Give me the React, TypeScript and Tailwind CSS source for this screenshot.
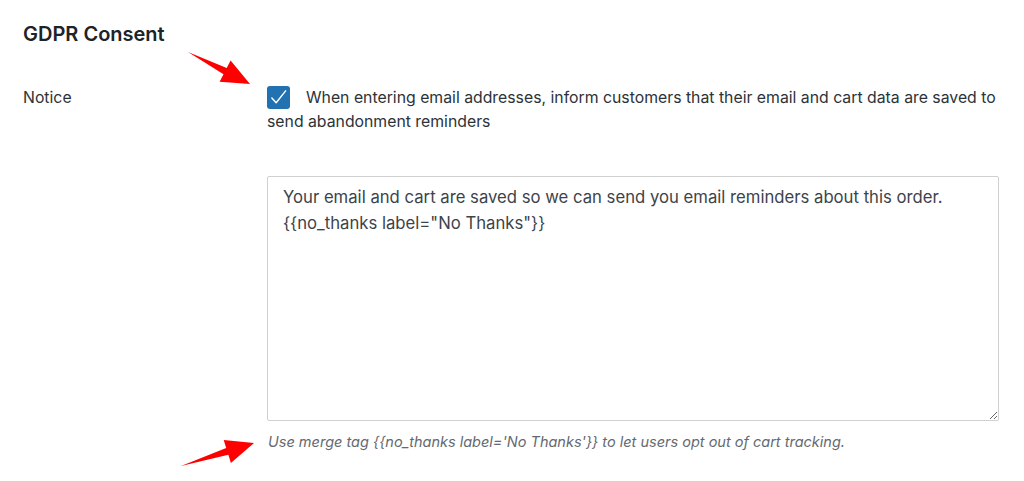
import React from "react";

const NOTICE_TEXT =
  'Your email and cart are saved so we can send you email reminders about this order.\n{{no_thanks label="No Thanks"}}';

function Arrows() {
  return (
    <svg
      className="pointer-events-none absolute left-0 top-0"
      width="1024"
      height="481"
      viewBox="0 0 1024 481"
    >
      <polygon
        fill="#ff0000"
        points="188,52 226.7,68 230.6,60.4 250,84 219.6,81.8 223.5,74.2"
      />
      <polygon
        fill="#ff0000"
        points="181,466 226.2,448.1 223.7,439.9 254,443 230.9,462.9 228.4,454.7"
      />
    </svg>
  );
}

export default function App() {
  return (
    <div
      className="relative h-[481px] w-[1024px] overflow-hidden bg-white text-[#3c434a]"
      style={{ fontFamily: "Inter, 'Noto Sans', sans-serif" }}
    >
      <div className="pl-[23px] pt-[22px]">
        <h2 className="text-[20px] font-semibold leading-[24px] text-[#1d2327]">
          GDPR Consent
        </h2>

        <div className="mt-[40px] flex">
          <div className="w-[244px] shrink-0 text-[15.8px] leading-[24px] text-[#2c3338]">
            Notice
          </div>

          <div className="w-[733px]">
            <label className="block text-[15.8px] leading-[24px] text-[#2c3338]">
              <span className="mr-[16px] inline-flex h-[23px] w-[23px] items-center justify-center rounded-[3px] bg-[#2271b1] align-top">
                <svg width="19" height="19" viewBox="0 0 20 20" fill="none">
                  <path
                    d="M3 10.5l4.5 5L17.5 3"
                    stroke="#ffffff"
                    strokeWidth="1.5"
                    strokeLinecap="round"
                    strokeLinejoin="round"
                  />
                </svg>
              </span>
              When entering email addresses, inform customers that their email and cart data are saved to send abandonment reminders
            </label>

            <textarea
              className="mt-[42px] block h-[245px] w-[732px] resize rounded-[2px] border border-[#d0d0d0] bg-white px-[15px] pt-[7px] text-[16.7px] leading-[26px] text-[#3c434a] outline-none"
              style={{ fontFamily: "Inter, 'Noto Sans', sans-serif" }}
              defaultValue={NOTICE_TEXT}
            />

            <p className="mt-[10px] pl-[1px] text-[14.5px] italic leading-[22px] text-[#646970]">
              Use merge tag {"{{no_thanks label='No Thanks'}}"} to let users opt out of cart tracking.
            </p>
          </div>
        </div>
      </div>

      <Arrows />
    </div>
  );
}
